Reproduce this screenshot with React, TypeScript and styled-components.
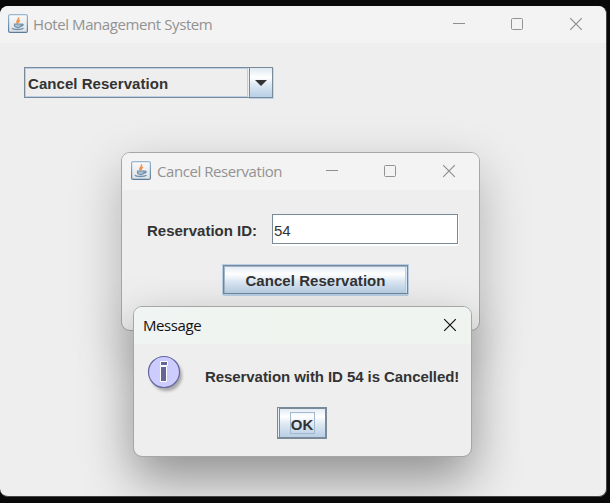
import React from "react";
import styled, { createGlobalStyle } from "styled-components";

const GlobalStyle = createGlobalStyle`
  html, body { margin: 0; height: 100%; overflow: hidden; background: #090909; }
  * { box-sizing: border-box; }
`;

const Desktop = styled.main`
  position: relative;
  width: 610px;
  height: 503px;
  padding-top: 6px;
  overflow: hidden;
  background: #090909;
  font-family: "Liberation Sans", Arial, sans-serif;
`;

const MainWindow = styled.section`
  position: relative;
  width: 607px;
  height: 491px;
  overflow: hidden;
  background: #eeeeee;
  border-radius: 8px;
  border-right: 1px solid #464646;
  border-bottom: 1px solid #464646;
`;

const Dialog = styled.section<{ $x: number; $y: number; $w: number; $h: number; $shadow: string }>`
  position: absolute;
  left: ${(p) => p.$x}px;
  top: ${(p) => p.$y}px;
  width: ${(p) => p.$w}px;
  height: ${(p) => p.$h}px;
  background: #eeeeee;
  background-clip: padding-box;
  border: 1px solid #a6a6a6;
  border-radius: 9px;
  box-shadow: ${(p) => p.$shadow};
`;

const TitleBar = styled.header<{ $tint?: boolean; $left: number }>`
  display: flex;
  align-items: center;
  height: 37px;
  padding: 0 0 1px ${(p) => p.$left}px;
  background: ${(p) => (p.$tint ? "linear-gradient(90deg, #f0f4f3, #f0f4ef 45%, #eff4f1)" : "#f3f3f3")};
  border-radius: 8px 8px 0 0;
`;

const Title = styled.h1<{ $spacing: number; $dark?: boolean }>`
  flex: 1;
  margin: 0;
  font: 400 15px/20px "Open Sans", "Noto Sans", sans-serif;
  letter-spacing: ${(p) => p.$spacing}px;
  white-space: nowrap;
  color: ${(p) => (p.$dark ? "#111" : "#929292")};
`;

const Controls = styled.div<{ $right: number }>`
  display: flex;
  gap: 45px;
  padding-right: ${(p) => p.$right}px;
  svg { display: block; }
`;

const Swing = styled.span<{ $spacing?: number }>`
  font-size: 15px;
  font-weight: 700;
  line-height: 17px;
  letter-spacing: ${(p) => p.$spacing ?? 0}px;
  color: #333333;
  white-space: nowrap;
`;

const Content = styled.div`
  padding: 24px;
`;

const Combo = styled.div`
  display: flex;
  width: 249px;
  height: 31px;
  border: 1px solid #7a8a99;
  border-right: 0;
`;

const ComboValue = styled.div`
  flex: 1;
  display: flex;
  align-items: center;
  padding: 2px 0 0 2px;
  border: 1px solid #b8cfe5;
  margin: 0 1px 0 0;
`;

const ComboArrow = styled.div`
  display: flex;
  width: 24px;
  height: 31px;
  margin-top: -1px;
  align-items: center;
  justify-content: center;
  border: 1px solid #7a8a99;
  background: linear-gradient(#dfe9f3, #ffffff 32%, #dde8f3 58%, #b8cfe5);
  box-shadow: 0 1px 0 #b8cfe5, 1px 1px 0 #c8dae9;
`;

const Form = styled.div`
  display: flex;
  flex-direction: column;
  padding: 24px 21px 0 25px;
`;

const FieldRow = styled.label`
  display: flex;
  align-items: center;
  justify-content: space-between;
`;

const FieldLabel = styled(Swing)`
  padding-top: 2px;
`;

const Field = styled.span`
  display: flex;
  align-items: center;
  width: 186px;
  height: 30px;
  padding: 3px 0 0 1px;
  background: #fff;
  border: 1px solid #7a8a99;
  box-shadow: 1px 1px 0 #fff, 0 2px 0 #fff;
  font-size: 15px;
  line-height: 17px;
  color: #333;
`;

const SwingButton = styled.button`
  display: flex;
  align-items: center;
  justify-content: center;
  padding: 0;
  background: linear-gradient(#dfe9f3, #ffffff 30%, #dde8f3 56%, #b8cfe5);
  border: 1px solid #7a8a99;
  font-family: inherit;
`;

const CancelButton = styled(SwingButton)`
  align-self: flex-start;
  width: 185px;
  height: 29px;
  margin: 21px 0 0 76px;
  padding-top: 1px;
  border-color: #75879a;
  outline: 1px solid #b8cfe5;
  box-shadow: inset 1px 1px 0 #a3b5c6, inset -1px 0 0 #dfeaf4, inset -2px 0 0 #b8cfe5, 0 2px 0 #b8cfe5;
`;

const MessageBody = styled.div`
  display: grid;
  grid-template-columns: 71px 1fr;
  padding-top: 11px;
`;

const InfoIcon = styled.svg`
  display: block;
  margin-left: 12px;
`;

const MessageText = styled(Swing)`
  padding-top: 13px;
`;

const OkButton = styled(SwingButton)`
  grid-column: 1 / -1;
  justify-self: center;
  width: 50px;
  height: 32px;
  margin: 13px 1px 0 0;
  border-width: 1px 2px 2px 1px;
  box-shadow: inset 1px 0 0 #e8eff6, inset 2px 0 0 #7a8a99, inset 0 1px 0 #7a8a99;
`;

const FocusBox = styled.span`
  display: flex;
  align-items: center;
  justify-content: center;
  width: 25px;
  height: 22px;
  margin: 1px 0 0 1px;
  padding-top: 3px;
  border: 1px solid #a3b8cc;
`;

const JavaIcon = styled.svg<{ $gap: number }>`
  flex: none;
  display: block;
  margin: 0 ${(p) => p.$gap}px 1px 0;
`;

function Java({ gap = 5 }: { gap?: number }) {
  return (
    <JavaIcon $gap={gap} width="20" height="19" viewBox="0 0 20 19" fill="none">
      <defs>
        <linearGradient id="javaFace" x1="0" y1="0" x2="0" y2="1">
          <stop stopColor="#fafafa" />
          <stop offset="1" stopColor="#dce1e5" />
        </linearGradient>
        <linearGradient id="javaEdge" x1="0" y1="0" x2="0" y2="1">
          <stop stopColor="#9ab8d0" />
          <stop offset="1" stopColor="#5b7b98" />
        </linearGradient>
      </defs>
      <rect x=".6" y=".6" width="18.8" height="17.8" rx="1.5" fill="url(#javaFace)" stroke="url(#javaEdge)" strokeWidth="1.2" />
      <path d="M9.7 9.5C6.8 6.7 11.5 6.6 10.5 3.4M10.5 9.3c-1.2-1.4.4-2.4 1.4-3.3" stroke="#ef9450" strokeWidth="1.5" />
      <path d="M6 10.2h7.3M6.4 10.8c.1 1.9 1.4 2.7 3.4 2.7s3.2-.8 3.4-2.7M13.2 10.4c3-.9 2.4 1.7-.4 2M4 14.2c1.4 1.7 9.3 1.7 11.5 0" stroke="#6f91ad" strokeWidth="1.3" />
      <path d="M7.2 11.8h5.2" stroke="#90abc0" />
    </JavaIcon>
  );
}

const Minimize = () => (
  <svg width="14" height="14">
    <path d="M2 6.5h12" stroke="#8e8e8e" />
  </svg>
);
const Maximize = () => (
  <svg width="14" height="14" fill="none">
    <rect x="1.5" y="1.5" width="11" height="11" rx="1" stroke="#929292" />
  </svg>
);
const Close = ({ color = "#8e8e8e" }: { color?: string }) => (
  <svg width="14" height="14">
    <path d="M1.2 1.2l11.6 11.6M12.8 1.2L1.2 12.8" stroke={color} strokeWidth="1.2" />
  </svg>
);

function WindowControls({ right }: { right: number }) {
  return (
    <Controls $right={right}>
      <Minimize />
      <Maximize />
      <Close />
    </Controls>
  );
}

export default function App() {
  return (
    <>
      <GlobalStyle />
      <Desktop>
        <MainWindow>
          <TitleBar $left={8}>
            <Java />
            <Title $spacing={-0.41}>Hotel Management System</Title>
            <WindowControls right={23} />
          </TitleBar>
          <Content>
            <Combo>
              <ComboValue>
                <Swing $spacing={0.05}>Cancel Reservation</Swing>
              </ComboValue>
              <ComboArrow>
                <svg width="12" height="6">
                  <path d="M0 0h12L6 6z" fill="#333" />
                </svg>
              </ComboArrow>
            </Combo>
          </Content>

          <Dialog $x={121} $y={146} $w={359} $h={179} $shadow="0 18px 50px rgba(0,0,0,.26)">
            <TitleBar $left={9}>
              <Java gap={6} />
              <Title $spacing={-0.43}>Cancel Reservation</Title>
              <WindowControls right={23} />
            </TitleBar>
            <Form>
              <FieldRow>
                <FieldLabel>Reservation ID:</FieldLabel>
                <Field>54</Field>
              </FieldRow>
              <CancelButton>
                <Swing $spacing={0.05}>Cancel Reservation</Swing>
              </CancelButton>
            </Form>
          </Dialog>

          <Dialog $x={133} $y={300} $w={339} $h={151} $shadow="0 22px 50px rgba(0,0,0,.4)">
            <TitleBar $tint $left={9}>
              <Title $spacing={-0.4} $dark>Message</Title>
              <Controls $right={14}>
                <Close color="#111" />
              </Controls>
            </TitleBar>
            <MessageBody>
              <InfoIcon width="38" height="39" viewBox="0 0 38 39">
                <defs>
                  <filter id="iconShadow" x="-20%" y="-20%" width="150%" height="150%">
                    <feGaussianBlur stdDeviation="1.6" />
                  </filter>
                </defs>
                <circle cx="20.5" cy="20.5" r="15.5" fill="#777" opacity=".6" filter="url(#iconShadow)" />
                <circle cx="18" cy="17" r="15.5" fill="#ccccff" stroke="#6666a0" strokeWidth="1.2" />
                <path d="M14.5 6.5h7v4h-7zM14.5 11.5h6v15h-6z" fill="#666699" stroke="#fff" />
              </InfoIcon>
              <MessageText $spacing={-0.07}>Reservation with ID 54 is Cancelled!</MessageText>
              <OkButton>
                <FocusBox>
                  <Swing>OK</Swing>
                </FocusBox>
              </OkButton>
            </MessageBody>
          </Dialog>
        </MainWindow>
      </Desktop>
    </>
  );
}
